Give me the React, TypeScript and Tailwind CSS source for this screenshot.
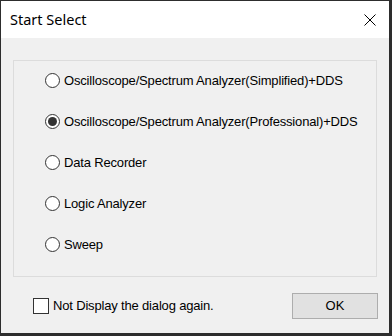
import { useState } from "react";

const options = [
  "Oscilloscope/Spectrum Analyzer(Simplified)+DDS",
  "Oscilloscope/Spectrum Analyzer(Professional)+DDS",
  "Data Recorder",
  "Logic Analyzer",
  "Sweep",
];

export default function App() {
  const [selected, setSelected] = useState(1);
  const [noShow, setNoShow] = useState(false);

  return (
    <div className="w-[392px] h-[336px] bg-[#2d2d2d] pt-px pl-px font-['Liberation_Sans',Arial,sans-serif]">
      <div className="w-[388px] h-[332px] bg-[#f0f0f0] flex flex-col">
        <div className="h-[37px] bg-white flex items-center justify-between pl-[9px] pr-[13px]">
          <span className="text-[14.5px] text-black font-['Noto_Sans',sans-serif] leading-none">Start Select</span>
          <svg width="12" height="12" viewBox="0 0 12 12" className="text-black">
            <path d="M0.5 0.5L11.5 11.5M11.5 0.5L0.5 11.5" stroke="currentColor" strokeWidth="1" />
          </svg>
        </div>

        <div className="px-[12px] pt-[22px]">
          <div className="w-[364px] h-[217px] border border-[#dcdcdc] pl-[31px]">
            <div className="-mt-px flex flex-col">
              {options.map((label, i) => (
                <label
                  key={label}
                  className="h-[41px] flex items-center gap-[4px] cursor-default"
                  onClick={() => setSelected(i)}
                >
                  <span className="w-[15px] h-[15px] rounded-full border border-[#333333] bg-white flex items-center justify-center">
                    {selected === i && <span className="w-[9px] h-[9px] rounded-full bg-[#333333]" />}
                  </span>
                  <span className="text-[13px] tracking-[-0.17px] text-black">{label}</span>
                </label>
              ))}
            </div>
          </div>
        </div>

        <div className="mt-[16px] flex items-center justify-between pl-[32px] pr-[11px]">
          <label className="flex items-center gap-[4px] cursor-default" onClick={() => setNoShow(!noShow)}>
            <span className="w-[16px] h-[16px] border border-[#333333] bg-white flex items-center justify-center">
              {noShow && (
                <svg width="12" height="12" viewBox="0 0 12 12">
                  <path d="M2 6.5L5 9.5L10.5 3" stroke="#333" strokeWidth="1.3" fill="none" />
                </svg>
              )}
            </span>
            <span className="text-[13px] tracking-[-0.17px] text-black">Not Display the dialog again.</span>
          </label>
          <button className="w-[86px] h-[26px] bg-[#e1e1e1] border border-[#adadad] text-[13px] text-black">
            OK
          </button>
        </div>
      </div>
    </div>
  );
}
